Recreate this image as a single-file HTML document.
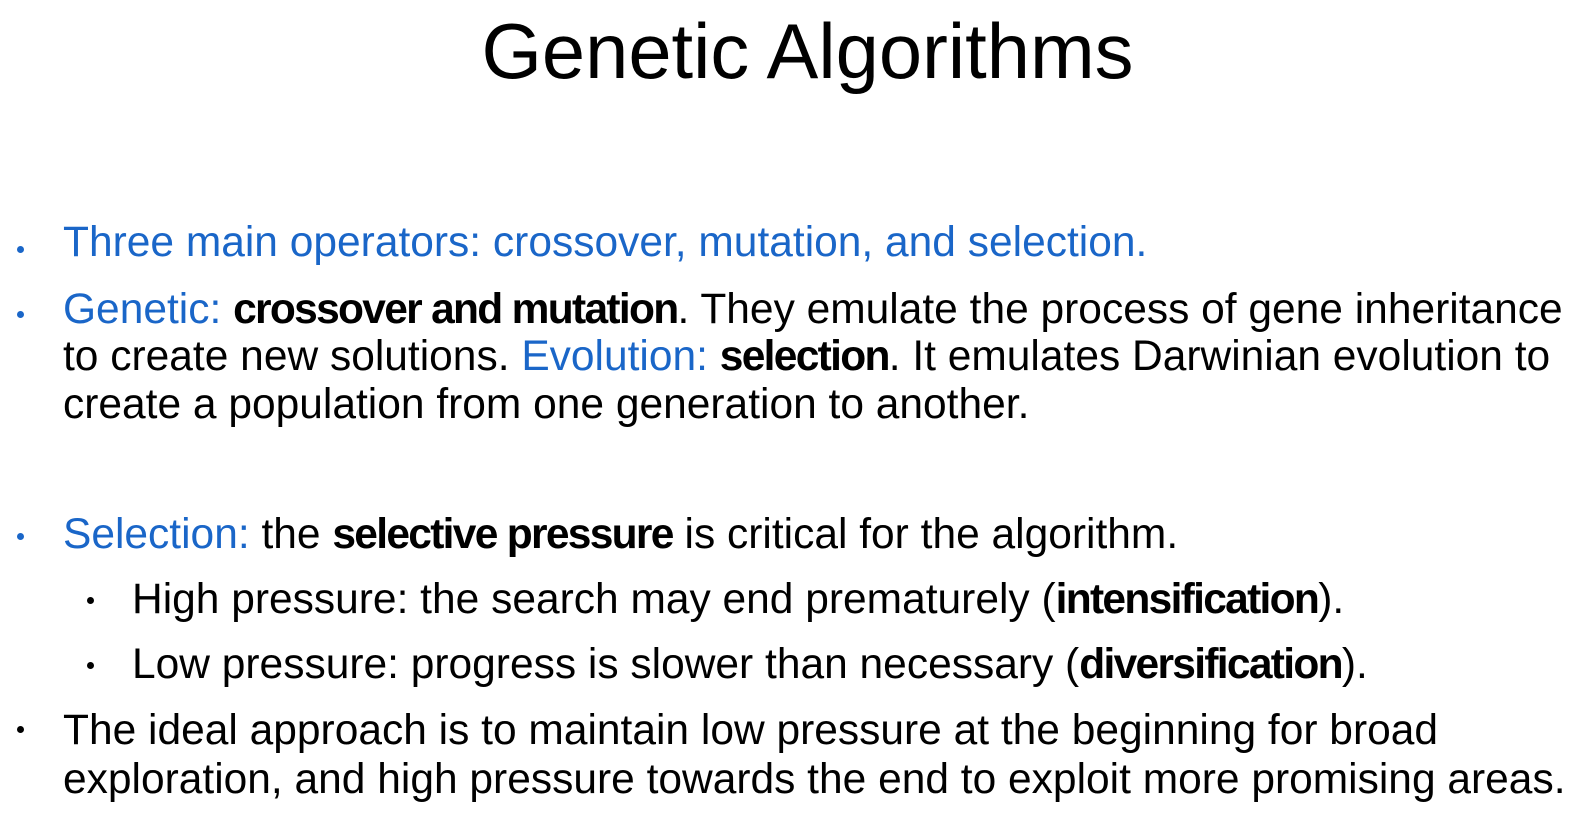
<!DOCTYPE html>
<html><head><meta charset="utf-8"><style>
html,body{margin:0;padding:0;background:#fff;}
body{width:1595px;height:821px;position:relative;overflow:hidden;font-family:"Liberation Sans",Arial,sans-serif;color:#000;}
.t{position:absolute;left:10px;width:1595px;text-align:center;top:7px;font-size:77.7px;line-height:90px;}
.l{position:absolute;white-space:nowrap;font-size:42.5px;line-height:47px;}
.b{color:#1a66c8;}
strong{font-weight:bold;letter-spacing:-1.7px;}
.d{position:absolute;width:7px;height:7px;border-radius:50%;}
</style></head><body>
<div class="t">Genetic Algorithms</div>
<div class="d" style="left:17px;top:246px;background:#1a66c8"></div>
<div class="l b" style="left:63px;top:219px">Three main operators: crossover, mutation, and selection.</div>
<div class="d" style="left:17px;top:311px;background:#1a66c8"></div>
<div class="l" style="left:63px;top:286px"><span class="b">Genetic:</span> <strong>crossover and mutation</strong>. They emulate the process of gene inheritance</div>
<div class="l" style="left:63px;top:333px">to create new solutions. <span class="b">Evolution:</span> <strong>selection</strong>. It emulates Darwinian evolution to</div>
<div class="l" style="left:63px;top:381px">create a population from one generation to another.</div>
<div class="d" style="left:17px;top:533px;background:#1a66c8"></div>
<div class="l" style="left:63px;top:511px"><span class="b">Selection:</span> the <strong>selective pressure</strong> is critical for the algorithm.</div>
<div class="d" style="left:87px;top:597px;background:#000"></div>
<div class="l" style="left:132px;top:576px">High pressure: the search may end prematurely (<strong>intensification</strong>).</div>
<div class="d" style="left:87px;top:662px;background:#000"></div>
<div class="l" style="left:132px;top:641px">Low pressure: progress is slower than necessary (<strong>diversification</strong>).</div>
<div class="d" style="left:17px;top:726px;background:#000"></div>
<div class="l" style="left:63px;top:707px">The ideal approach is to maintain low pressure at the beginning for broad</div>
<div class="l" style="left:63px;top:756px">exploration, and high pressure towards the end to exploit more promising areas.</div>
</body></html>
